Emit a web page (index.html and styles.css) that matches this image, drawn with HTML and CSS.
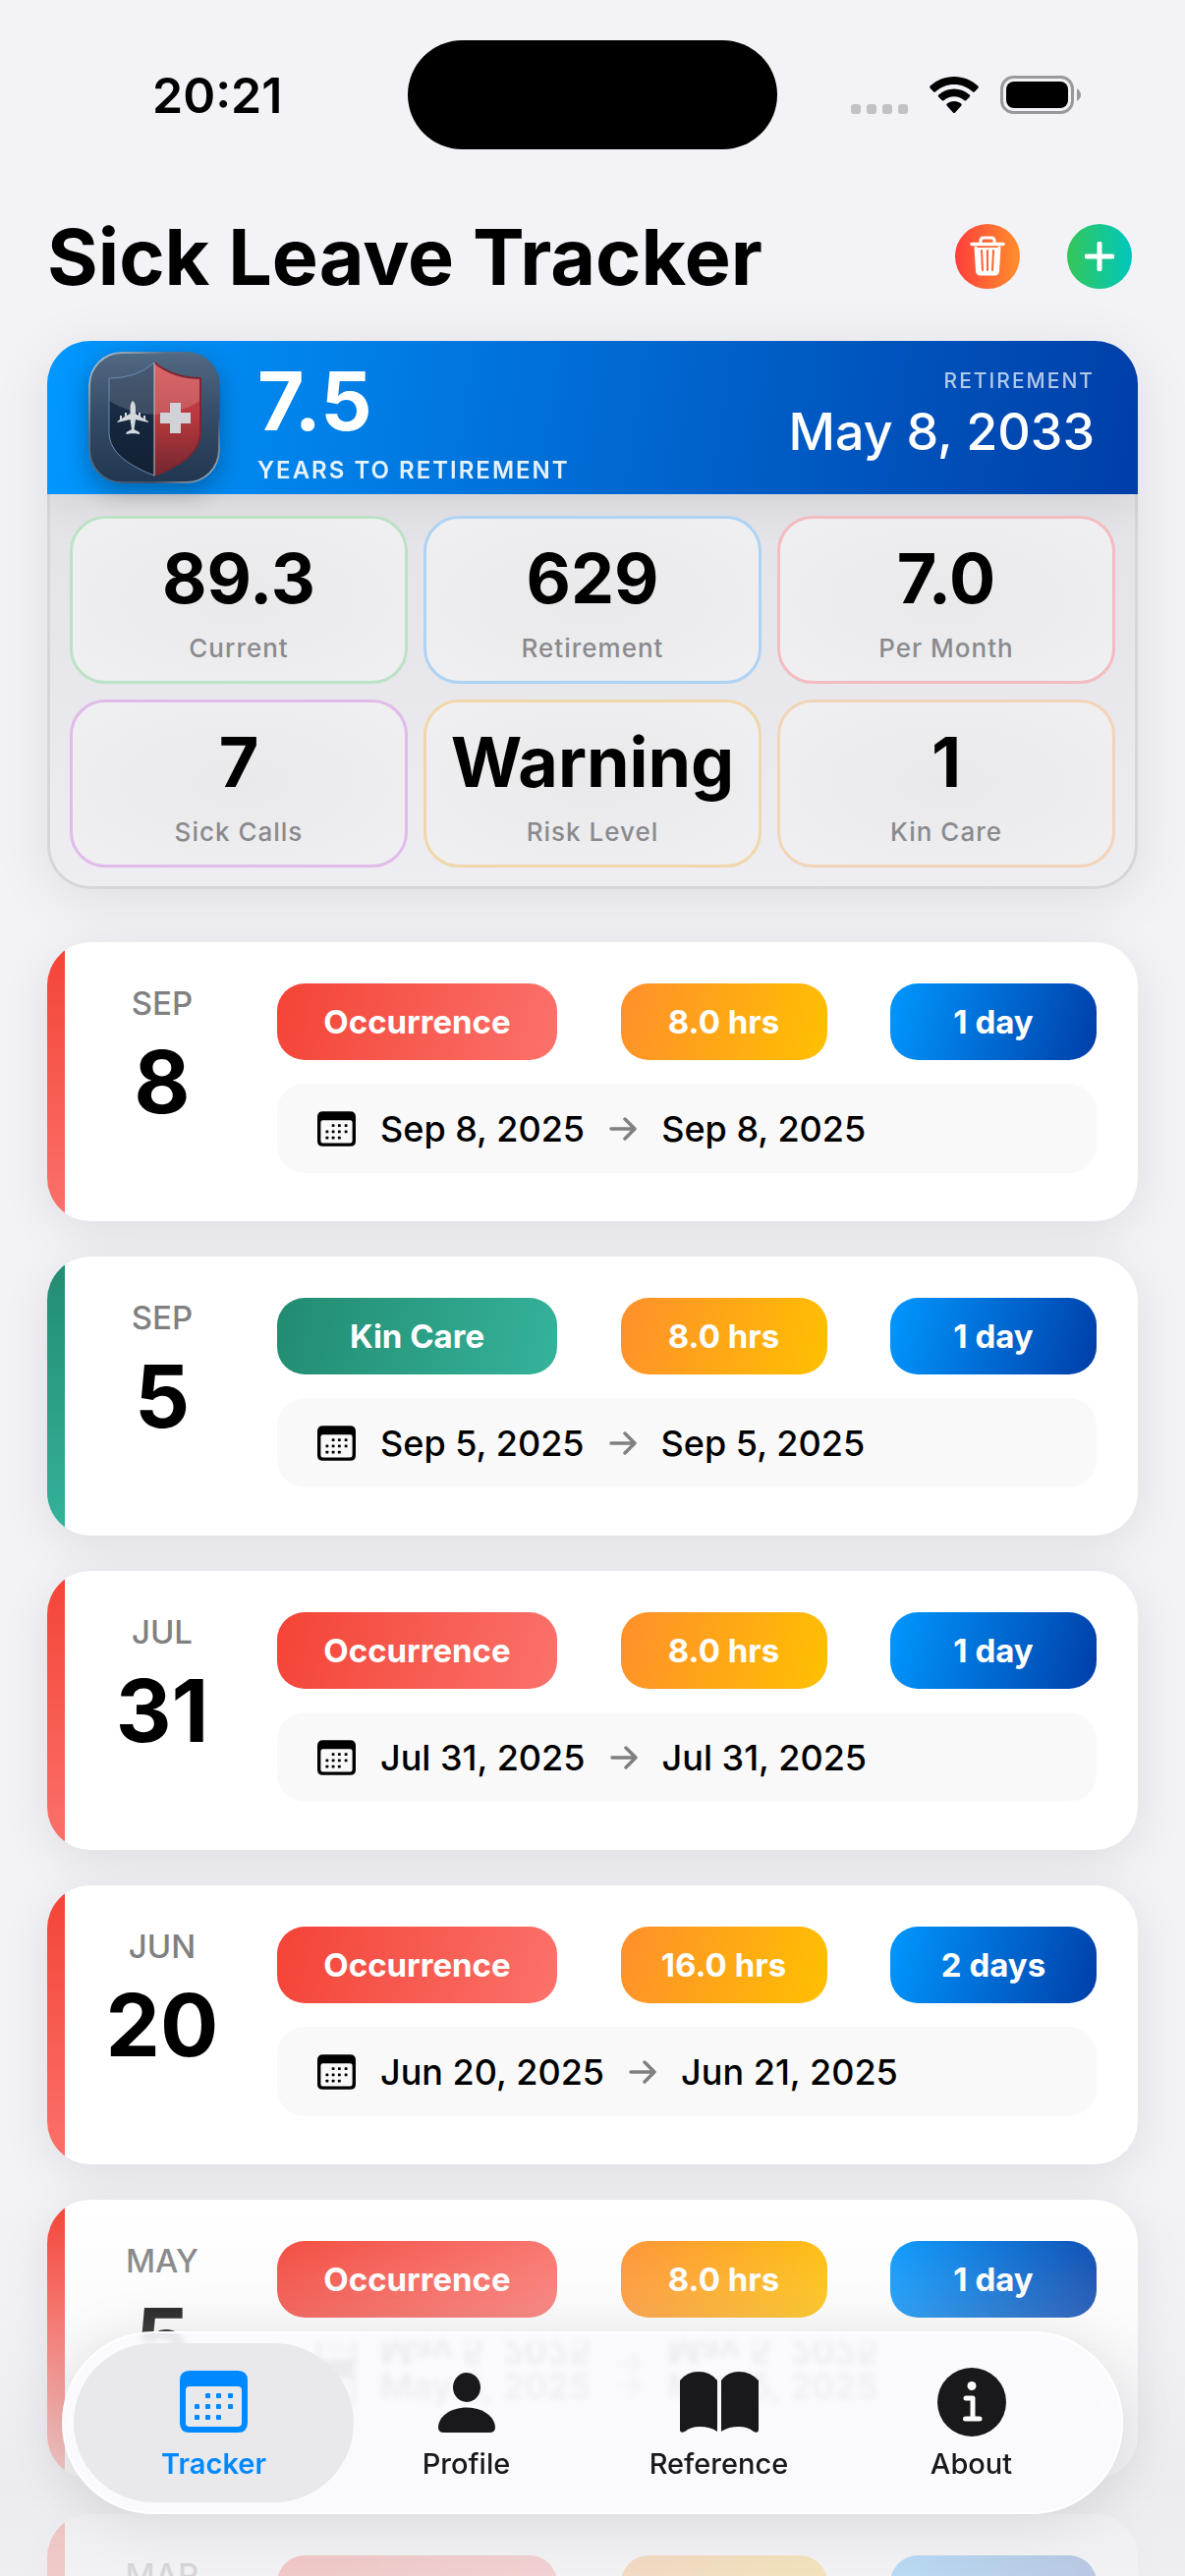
FILE: index.html
```html
<!DOCTYPE html>
<html lang="en">
<head>
    <meta charset="UTF-8">
    <meta name="viewport" content="width=device-width, initial-scale=1.0">
    <title>Sick Leave Tracker</title>
    <link rel="stylesheet" href="styles.css">
</head>
<body>
    <!-- shared icons -->
    <svg class="icon-defs" aria-hidden="true">
        <symbol id="icon-calendar" viewBox="0 0 69 63">
            <path fill="currentColor" fill-rule="evenodd" d="M10 0H59Q69 0 69 10V53Q69 63 59 63H10Q0 63 0 53V10Q0 0 10 0ZM10 16Q6 16 6 20V53Q6 57 10 57H59Q63 57 63 53V20Q63 16 59 16Z"/>
            <g fill="currentColor">
                <rect x="26" y="23" width="5" height="5" rx="1"/><rect x="37" y="23" width="5" height="5" rx="1"/><rect x="49" y="23" width="5" height="5" rx="1"/>
                <rect x="15" y="34" width="5" height="5" rx="1"/><rect x="26" y="34" width="5" height="5" rx="1"/><rect x="37" y="34" width="5" height="5" rx="1"/><rect x="49" y="34" width="5" height="5" rx="1"/>
                <rect x="15" y="45" width="5" height="5" rx="1"/><rect x="26" y="45" width="5" height="5" rx="1"/><rect x="37" y="45" width="5" height="5" rx="1"/>
            </g>
        </symbol>
        <symbol id="icon-arrow" viewBox="0 0 28 24">
            <path d="M2 12H26M16 2L26 12L16 22" fill="none" stroke="currentColor" stroke-width="3.500" stroke-linecap="round" stroke-linejoin="round"/>
        </symbol>
    </svg>

    <div class="status-bar">
        <span class="time">20:21</span>
        <div class="island"></div>
        <div class="status-icons">
            <svg width="58" height="40" viewBox="0 0 58 40" fill="#c2c1c6">
                <rect y="29" width="10" height="10" rx="3"/><rect x="16" y="29" width="10" height="10" rx="3"/><rect x="32" y="29" width="10" height="10" rx="3"/><rect x="48" y="29" width="10" height="10" rx="3"/>
            </svg>
            <svg width="50" height="38" viewBox="0 0 50 38">
                <path d="M25 0C34.500 0 43 3.600 49.300 9.600Q50.300 10.700 49.300 11.800L46 15.200Q44.900 16.200 43.800 15.200C38.800 10.500 32.200 7.900 25 7.900S11.200 10.500 6.200 15.200Q5.100 16.200 4 15.200L.7 11.800Q-.3 10.700.7 9.600C7 3.600 15.500 0 25 0Z"/>
                <path d="M25 12.500C31 12.500 36.500 14.800 40.700 18.500Q41.900 19.600 40.800 20.700L37.400 24.100Q36.300 25.100 35.200 24.100C32.500 21.700 28.900 20.300 25 20.300S17.500 21.700 14.800 24.100Q13.700 25.100 12.600 24.100L9.200 20.700Q8.100 19.600 9.300 18.500C13.500 14.800 19 12.500 25 12.500Z"/>
                <path d="M25 25C27.800 25 30.300 26 32.200 27.600Q33.300 28.700 32.200 29.800L26.100 36.500Q25 37.500 23.900 36.500L17.800 29.800Q16.700 28.700 17.800 27.600C19.700 26 22.200 25 25 25Z"/>
            </svg>
            <svg width="82" height="40" viewBox="0 0 82 40">
                <rect x="1.500" y="1.500" width="72" height="36" rx="12" fill="none" stroke="#98989d" stroke-width="3"/>
                <rect x="6" y="6" width="63" height="27" rx="8"/>
                <path d="M78 13Q82 16 82 19.500T78 26Z" fill="#98989d"/>
            </svg>
        </div>
    </div>

    <main>
        <header class="page-header">
            <h1>Sick Leave Tracker</h1>
            <button type="button" class="round-button delete" aria-label="Delete">
                <svg width="36" height="42" viewBox="0 0 36 42" fill="none" stroke="white" stroke-linecap="round" stroke-linejoin="round">
                    <path d="M2 8.500H34" stroke-width="3.500"/>
                    <path d="M11 8V5Q11 2 14 2H22Q25 2 25 5V8" stroke-width="3"/>
                    <path d="M6 12L7.500 36Q7.700 39 11 39H25Q28.300 39 28.500 36L30 12" fill="white" stroke-width="3"/>
                    <path d="M12 15L13 35M18 15V35M24 15L23 35" stroke="#ff6236" stroke-width="2"/>
                </svg>
            </button>
            <button type="button" class="round-button add" aria-label="Add">
                <svg width="30" height="30" viewBox="0 0 30 30" stroke="white" stroke-width="5" stroke-linecap="round">
                    <path d="M15 2V28M2 15H28"/>
                </svg>
            </button>
        </header>

        <section class="summary">
            <div class="summary-header">
                <svg class="app-icon" viewBox="0 0 134 134">
                    <defs>
                        <linearGradient id="iconBg" x2="0" y2="1"><stop stop-color="#526983"/><stop offset=".5" stop-color="#344b67"/><stop offset="1" stop-color="#21364f"/></linearGradient>
                        <linearGradient id="navySide" x2="0" y2="1"><stop stop-color="#263f60"/><stop offset=".6" stop-color="#14253b"/><stop offset="1" stop-color="#142032"/></linearGradient>
                        <linearGradient id="redSide" x2="0" y2="1"><stop stop-color="#d94c50"/><stop offset=".5" stop-color="#b8383d"/><stop offset="1" stop-color="#68252e"/></linearGradient>
                        <linearGradient id="rim" x2="1" y2="1"><stop stop-color="#c5ced8"/><stop offset=".3" stop-color="#5b7088"/><stop offset=".75" stop-color="#3a506b"/><stop offset="1" stop-color="#b4bfca"/></linearGradient>
                        <clipPath id="shield"><path d="M67 11Q87 27 114 27V82C114 104 90 117 67 126C44 117 21 104 21 82V27Q50 27 67 11Z"/></clipPath>
                    </defs>
                    <rect x="1" y="1" width="132" height="132" rx="33" fill="url(#iconBg)" stroke="url(#rim)" stroke-width="2"/>
                    <g clip-path="url(#shield)">
                        <path d="M0 0H67V134H0Z" fill="url(#navySide)"/>
                        <path d="M67 0H134V134H67Z" fill="url(#redSide)"/>
                        <path d="M21 0H114V50Q67 78 21 50Z" fill="white" opacity=".16"/>
                    </g>
                    <path d="M67 11Q50 27 21 27V82C21 104 44 117 67 126" fill="none" stroke="#6f8db3" stroke-width="1"/>
                    <path d="M67 11Q87 27 114 27V82C114 104 90 117 67 126" fill="none" stroke="#7d2632" stroke-width="2"/>
                    <path d="M67 11V126" stroke="#bfc3ca" stroke-width="1"/>
                    <path d="M45 50Q42.500 52 42.500 58V63L39 65V62H37V66L34 68V65H32V69L29.500 71V72L42.500 69L44 79L38.500 82V84L44.500 83L45 84L46 83L52 84V82L46.500 79L48 69L61 72V71L58 69V65H56V68L53 66V62H51V65L48 63V58Q48 52 45 50Z" fill="#d3d7dc"/>
                    <path d="M83 52H94V62H104V73H94V83H83V73H73V62H83Z" fill="#d0d2d8"/>
                </svg>
                <div class="years">
                    <strong>7.5</strong>
                    <span>YEARS TO RETIREMENT</span>
                </div>
                <div class="retirement">
                    <span>RETIREMENT</span>
                    <strong>May 8, 2033</strong>
                </div>
            </div>
            <div class="stats">
                <div class="stat green"><strong>89.3</strong><span>Current</span></div>
                <div class="stat blue"><strong>629</strong><span>Retirement</span></div>
                <div class="stat red"><strong>7.0</strong><span>Per Month</span></div>
                <div class="stat purple"><strong>7</strong><span>Sick Calls</span></div>
                <div class="stat amber"><strong>Warning</strong><span>Risk Level</span></div>
                <div class="stat orange"><strong>1</strong><span>Kin Care</span></div>
            </div>
        </section>

        <section class="entries">
            <article class="entry">
                <div class="date"><span>SEP</span><strong>8</strong></div>
                <div class="details">
                    <div class="pills"><span class="pill type">Occurrence</span><span class="pill hours">8.0 hrs</span><span class="pill days">1 day</span></div>
                    <div class="range"><svg class="calendar"><use href="#icon-calendar"/></svg><span>Sep 8, 2025</span><svg class="arrow"><use href="#icon-arrow"/></svg><span>Sep 8, 2025</span></div>
                </div>
            </article>
            <article class="entry kin-care">
                <div class="date"><span>SEP</span><strong>5</strong></div>
                <div class="details">
                    <div class="pills"><span class="pill type">Kin Care</span><span class="pill hours">8.0 hrs</span><span class="pill days">1 day</span></div>
                    <div class="range"><svg class="calendar"><use href="#icon-calendar"/></svg><span>Sep 5, 2025</span><svg class="arrow"><use href="#icon-arrow"/></svg><span>Sep 5, 2025</span></div>
                </div>
            </article>
            <article class="entry">
                <div class="date"><span>JUL</span><strong>31</strong></div>
                <div class="details">
                    <div class="pills"><span class="pill type">Occurrence</span><span class="pill hours">8.0 hrs</span><span class="pill days">1 day</span></div>
                    <div class="range"><svg class="calendar"><use href="#icon-calendar"/></svg><span>Jul 31, 2025</span><svg class="arrow"><use href="#icon-arrow"/></svg><span>Jul 31, 2025</span></div>
                </div>
            </article>
            <article class="entry">
                <div class="date"><span>JUN</span><strong>20</strong></div>
                <div class="details">
                    <div class="pills"><span class="pill type">Occurrence</span><span class="pill hours">16.0 hrs</span><span class="pill days">2 days</span></div>
                    <div class="range"><svg class="calendar"><use href="#icon-calendar"/></svg><span>Jun 20, 2025</span><svg class="arrow"><use href="#icon-arrow"/></svg><span>Jun 21, 2025</span></div>
                </div>
            </article>
            <article class="entry">
                <div class="date"><span>MAY</span><strong>5</strong></div>
                <div class="details">
                    <div class="pills"><span class="pill type">Occurrence</span><span class="pill hours">8.0 hrs</span><span class="pill days">1 day</span></div>
                    <div class="range mirrored"><svg class="calendar"><use href="#icon-calendar"/></svg><span>May 5, 2025</span><svg class="arrow"><use href="#icon-arrow"/></svg><span>May 5, 2025</span></div>
                </div>
            </article>
            <article class="entry">
                <div class="date"><span>MAR</span></div>
                <div class="details">
                    <div class="pills"><span class="pill type"></span><span class="pill hours"></span><span class="pill days"></span></div>
                </div>
            </article>
        </section>
    </main>

    <div class="bottom-fade"></div>

    <nav class="tab-bar">
        <a href="#tracker" class="tab active">
            <svg width="69" height="70" viewBox="0 0 69 70"><use href="#icon-calendar" y="3" width="69" height="63"/></svg>
            <span>Tracker</span>
        </a>
        <a href="#profile" class="tab">
            <svg width="58" height="70" viewBox="0 0 58 70" fill="currentColor">
                <ellipse cx="29" cy="20" rx="14" ry="15"/>
                <path d="M6 66Q0 66 0 61C0 50 12 40.500 29 40.500S58 50 58 61Q58 66 52 66Z"/>
            </svg>
            <span>Profile</span>
        </a>
        <a href="#reference" class="tab">
            <svg width="80" height="70" viewBox="0 0 80 70" fill="currentColor">
                <path d="M0 13Q7 4 19 4T38 13V65Q31 60 20 60Q11 60 5 65Q0 67 0 63Z"/>
                <path d="M42 13Q48 4 60 4T80 13V63Q80 67 75 65Q69 60 60 60Q49 60 42 65Z"/>
            </svg>
            <span>Reference</span>
        </a>
        <a href="#about" class="tab">
            <svg width="70" height="70" viewBox="0 0 70 70">
                <circle cx="35" cy="35" r="35" fill="currentColor"/>
                <circle cx="35" cy="18.500" r="4.500" fill="white"/>
                <path d="M29 31H36V52M28.500 52H43" fill="none" stroke="white" stroke-width="5" stroke-linecap="round" stroke-linejoin="round"/>
            </svg>
            <span>About</span>
        </a>
    </nav>
</body>
</html>
```
FILE: styles.css
```css
* {
    box-sizing: border-box;
}

body {
    font-family: Inter, "Liberation Sans", sans-serif;
    background-color: #f2f2f7;
    color: #000;
    margin: 0;
    height: 100vh;
    overflow: hidden;
}

h1 {
    flex: 1;
    margin: 0;
    font-size: 79px;
    line-height: 96px;
    font-weight: 700;
}

.icon-defs {
    display: none;
}

/* status bar */
.status-bar {
    display: grid;
    grid-template-columns: 1fr auto 1fr;
    align-items: center;
    padding-top: 41px;
}

.time {
    padding-left: 155px;
    font-size: 50px;
    font-weight: 600;
}

.island {
    width: 376px;
    height: 111px;
    border-radius: 56px;
    background-color: #000;
}

.status-icons {
    display: flex;
    justify-content: flex-end;
    align-items: center;
    gap: 22px;
    padding-right: 106px;
}

main {
    padding: 0 48px;
}

.page-header {
    display: flex;
    align-items: center;
    gap: 48px;
    padding: 61px 6px 38px 0;
}

.round-button {
    display: flex;
    align-items: center;
    justify-content: center;
    width: 66px;
    height: 66px;
    padding: 0;
    border: none;
    border-radius: 50%;
    cursor: pointer;
}

.delete {
    background: linear-gradient(90deg, #ff3f3c, #ff8f2c);
}

.add {
    background: linear-gradient(90deg, #34c759, #00c7be);
}

/* summary card */
.summary {
    border-radius: 44px;
    overflow: hidden;
    background: linear-gradient(#e2e1e6, #e6e5ea 50%, #ededf2);
    box-shadow: inset 0 0 0 3px #d6d5da, 0 10px 60px rgba(0, 0, 0, 0.09);
}

.summary-header {
    display: flex;
    align-items: center;
    height: 156px;
    padding: 0 44px 0 42px;
    color: white;
    background: linear-gradient(98deg, #0098ff, #003ea8);
    box-shadow: 0 0 50px rgba(0, 0, 0, 0.12);
}

.app-icon {
    width: 134px;
    height: 134px;
    margin-right: 38px;
    border-radius: 34px;
    box-shadow: 0 8px 24px rgba(0, 0, 0, 0.3);
}

.years,
.retirement {
    display: flex;
    flex-direction: column;
}

.years {
    flex: 1;
    padding-top: 8px;
}

.years strong {
    font-size: 82px;
    line-height: 100px;
}

.years span {
    font-size: 24px;
    line-height: 40px;
    font-weight: 600;
    letter-spacing: 2px;
    opacity: 0.9;
}

.retirement {
    align-items: flex-end;
}

.retirement span {
    font-size: 21px;
    line-height: 30px;
    font-weight: 500;
    letter-spacing: 2px;
    opacity: 0.7;
}

.retirement strong {
    font-size: 52px;
    line-height: 74px;
    font-weight: 500;
}

.stats {
    display: grid;
    grid-template-columns: repeat(3, 1fr);
    gap: 16px;
    padding: 22px 23px;
}

.stat {
    display: flex;
    flex-direction: column;
    align-items: center;
    height: 171px;
    padding-top: 20px;
    border: 3px solid;
    border-radius: 36px;
    background: radial-gradient(#e9e9eb, #f0f0f2);
}

.stat strong {
    font-size: 70px;
    line-height: 82px;
}

.stat span {
    font-size: 26px;
    line-height: 60px;
    font-weight: 500;
    letter-spacing: 1px;
    color: #8a8a8d;
}

.stat.green { border-color: #bce2c6; }
.stat.blue { border-color: #aed3f4; }
.stat.red { border-color: #f2bcc0; }
.stat.purple { border-color: #e1bbea; }
.stat.amber { border-color: #f1d7ab; }
.stat.orange { border-color: #f3d4b8; }

/* leave entries */
.entries {
    display: flex;
    flex-direction: column;
    gap: 36px;
    margin-top: 54px;
}

.entry {
    display: flex;
    flex-shrink: 0;
    height: 284px;
    padding: 42px 42px 42px 0;
    border-radius: 44px;
    background: linear-gradient(#f44336, #fb726b) left / 18px 100% no-repeat white;
    box-shadow: 0 10px 50px rgba(0, 0, 0, 0.09);
}

.entry .type {
    width: 285px;
    background: linear-gradient(105deg, #f44336, #fb726b);
}

.kin-care {
    background-image: linear-gradient(#228b70, #35b39b);
}

.kin-care .type {
    background: linear-gradient(105deg, #228b70, #35b39b);
}

.date {
    display: flex;
    flex-direction: column;
    align-items: center;
    width: 234px;
}

.date span {
    font-size: 33px;
    line-height: 40px;
    font-weight: 500;
    color: #808080;
}

.date strong {
    font-size: 88px;
    line-height: 120px;
}

.details {
    flex: 1;
}

.pills {
    display: flex;
    justify-content: space-between;
}

.pill {
    width: 210px;
    height: 78px;
    border-radius: 28px;
    color: white;
    font-size: 33px;
    line-height: 78px;
    font-weight: 700;
    text-align: center;
}

.hours {
    background: linear-gradient(105deg, #ff8f2c, #ffc000);
}

.days {
    background: linear-gradient(105deg, #0098ff, #003ea8);
}

.range {
    display: flex;
    align-items: center;
    gap: 25px;
    height: 91px;
    margin-top: 24px;
    padding: 0 41px;
    border-radius: 28px;
    background-color: #f9f9f9;
    font-size: 36px;
    line-height: 36px;
    font-weight: 500;
}

.calendar {
    width: 39px;
    height: 36px;
}

.arrow {
    width: 28px;
    height: 24px;
    color: #808080;
}

.mirrored {
    overflow: hidden;
}

.mirrored > * {
    -webkit-box-reflect: above;
}

.bottom-fade {
    position: fixed;
    left: 0;
    right: 0;
    bottom: 0;
    height: 380px;
    background: linear-gradient(rgba(238, 238, 242, 0), rgba(238, 238, 242, 0.2) 110px, rgba(234, 234, 238, 0.75) 290px, rgba(238, 238, 241, 0.78));
    pointer-events: none;
}

/* tab bar */
.tab-bar {
    position: fixed;
    left: 63px;
    right: 63px;
    bottom: 63px;
    display: flex;
    padding: 10px 24px;
    border: 2px solid white;
    border-radius: 93px;
    background-color: rgba(251, 251, 255, 0.9);
    backdrop-filter: blur(3px);
    box-shadow: 0 6px 60px rgba(0, 0, 0, 0.1);
}

.tab {
    flex: 1;
    display: flex;
    flex-direction: column;
    align-items: center;
    height: 162px;
    margin: 0 -14px;
    padding-top: 25px;
    border-radius: 81px;
    color: #19191b;
    font-size: 29px;
    line-height: 56px;
    font-weight: 500;
    text-decoration: none;
}

.tab.active {
    color: #0088ff;
    background-color: #e9e9ec;
    font-weight: 600;
}
```
